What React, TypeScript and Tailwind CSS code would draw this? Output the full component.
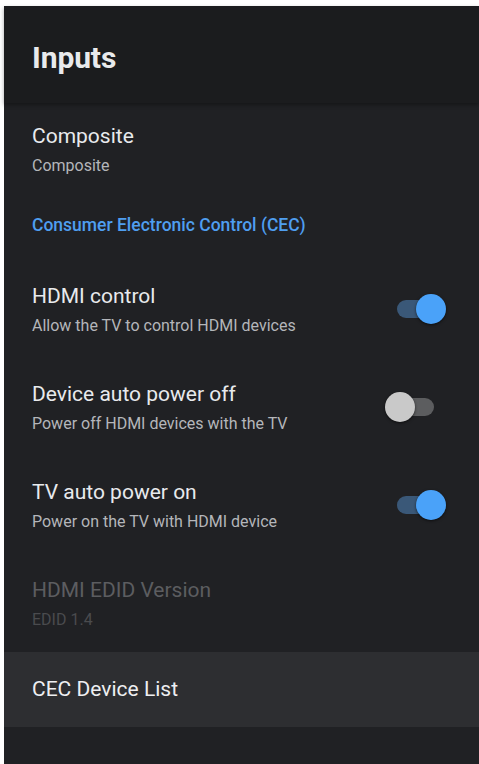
import { useState } from 'react';

type Row = {
  title: string;
  summary?: string;
  toggle?: boolean;
  disabled?: boolean;
};

const Toggle = ({ on, onClick }: { on: boolean; onClick: () => void }) => {
  return (
    <button onClick={onClick} className="relative w-[61px] h-[30px] shrink-0">
      <span
        className={`absolute left-[12px] top-[6px] w-[37px] h-[18px] rounded-full ${
          on ? 'bg-[#3a5878]' : 'bg-[#5c5d5f]'
        }`}
      />
      <span
        className={`absolute top-0 w-[30px] h-[30px] rounded-full shadow-[0_1px_3px_rgba(0,0,0,0.6)] ${
          on ? 'left-[31px] bg-[#4aa2f9]' : 'left-0 bg-[#c9c9c9]'
        }`}
      />
    </button>
  );
};

const App = () => {
  const [hdmiControl, setHdmiControl] = useState(true);
  const [autoOff, setAutoOff] = useState(false);
  const [autoOn, setAutoOn] = useState(true);

  const rows: (Row & { value?: boolean; set?: (v: boolean) => void })[] = [
    { title: 'HDMI control', summary: 'Allow the TV to control HDMI devices', toggle: true, value: hdmiControl, set: setHdmiControl },
    { title: 'Device auto power off', summary: 'Power off HDMI devices with the TV', toggle: true, value: autoOff, set: setAutoOff },
    { title: 'TV auto power on', summary: 'Power on the TV with HDMI device', toggle: true, value: autoOn, set: setAutoOn },
    { title: 'HDMI EDID Version', summary: 'EDID 1.4', disabled: true },
  ];

  return (
    <div className="bg-white pt-[6px] pl-[4px] h-[764px] w-[479px] overflow-hidden font-['Roboto',sans-serif]">
      <div className="flex flex-col h-full bg-[#202124]">
        {/* header */}
        <div className="h-[97px] shrink-0 bg-[#1b1c1e] flex items-center pl-[28px] pt-[6px] shadow-[0_2px_4px_rgba(0,0,0,0.35)] z-10">
          <h1 className="text-[30px] font-bold text-[#e9eaec] tracking-[-0.1px]">Inputs</h1>
        </div>

        <div className="h-[94px] shrink-0 flex flex-col justify-center pl-[28px] pr-[33px] pt-[2px]">
          <div className="text-[21px] leading-[27px] text-[#e8eaed]">Composite</div>
          <div className="mt-[3px] text-[16px] leading-[26px] text-[#b4b6ba]">Composite</div>
        </div>

        <div className="h-[63px] shrink-0 flex items-center pl-[28px] pb-[7px]">
          <span className="text-[17.5px] font-medium text-[#4f9ef0]">Consumer Electronic Control (CEC)</span>
        </div>

        {rows.map((row) => (
          <div key={row.title} className="h-[98px] shrink-0 flex items-center justify-between pl-[28px] pr-[33px]">
            <div className="flex flex-col pt-[3px]">
              <div className={`text-[21px] leading-[27px] ${row.disabled ? 'text-[#5c5d60]' : 'text-[#e8eaed]'}`}>
                {row.title}
              </div>
              <div className={`mt-[3px] text-[16px] leading-[26px] ${row.disabled ? 'text-[#4a4b4e]' : 'text-[#b4b6ba]'}`}>
                {row.summary}
              </div>
            </div>
            {row.toggle && row.set && (
              <Toggle on={!!row.value} onClick={() => row.set && row.set(!row.value)} />
            )}
          </div>
        ))}

        <div className="h-[75px] shrink-0 bg-[#2d2e31] flex items-center pl-[28px]">
          <span className="text-[21px] text-[#eeeff1]">CEC Device List</span>
        </div>

        <div className="flex-1" />
      </div>
    </div>
  );
};

export default App;
